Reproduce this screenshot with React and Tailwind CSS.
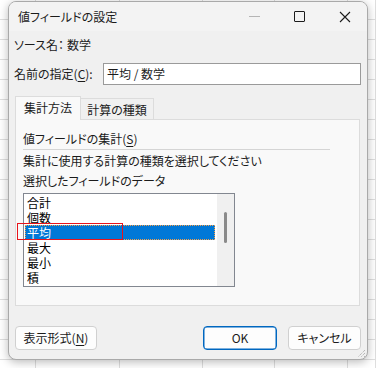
import React from "react";

const F = "font-['Noto_Sans_CJK_JP','Noto_Sans',sans-serif] [font-feature-settings:'palt']";

function Grid() {
  const cols = [36, 84, 83, 72, 73, 28];
  return (
    <div className="flex h-[368px] w-[376px] bg-white bg-[repeating-linear-gradient(to_bottom,transparent_0px,transparent_19px,#dedede_19px,#dedede_20px)]">
      {cols.map((w, i) => (
        <div key={i} style={{ width: w }} className="h-full shrink-0 border-r border-[#dedede]" />
      ))}
    </div>
  );
}

function U({ children }) {
  return <span className="underline underline-offset-[2px]">{children}</span>;
}

export default function App() {
  const items = ["合計", "個数", "平均", "最大", "最小", "積"];
  return (
    <div className={`relative h-[368px] w-[376px] overflow-hidden text-[12px] leading-[16px] text-[#1b1b1b] ${F}`}>
      <Grid />
      <div className="absolute left-[8px] top-[1px] flex h-[359px] w-[360px] flex-col overflow-hidden rounded-[8px] border border-[#a9a9a9] bg-[#f0f0f0] shadow-[0_2px_10px_rgba(0,0,0,0.28)]">
        {/* title bar */}
        <div className="flex h-[29px] shrink-0 items-center bg-[#f3f3f3]">
          <div className="pl-[9px]">値フィールドの設定</div>
          <div className="ml-auto flex h-full">
            <div className="flex h-full w-[45px] items-center justify-center">
              <div className="h-px w-[11px] bg-[#b5b5b5]" />
            </div>
            <div className="flex h-full w-[45px] items-center justify-center">
              <div className="h-[11px] w-[11px] rounded-[1px] border border-[#1b1b1b]" />
            </div>
            <div className="flex h-full w-[45px] items-center justify-center">
              <svg width="12" height="12" viewBox="0 0 12 12">
                <path d="M1 1 L11 11 M11 1 L1 11" stroke="#1b1b1b" strokeWidth="1.1" fill="none" />
              </svg>
            </div>
          </div>
        </div>

        {/* body */}
        <div className="flex flex-1 flex-col px-[6px] pt-[4px]">
          <div className="flex h-[20px] items-center">
            <div className="w-[53px] -ml-px">ソース名：</div>
            <div>数学</div>
          </div>
          <div className="mt-[8px] flex h-[22px] items-center">
            <div className="w-[89px] -ml-px">名前の指定(<U>C</U>):</div>
            <div className="flex h-[22px] flex-1 items-center border border-[#9a9a9a] bg-white pl-[3px]">
              平均 / 数学
            </div>
          </div>

          {/* tabs */}
          <div className="mt-[11px] flex h-[23px] items-end">
            <div className="relative z-10 -mb-px flex h-[24px] w-[66px] items-center justify-center border border-b-0 border-[#dcdcdc] bg-[#f9f9f9] pb-[1px]">
              集計方法
            </div>
            <div className="flex h-[21px] w-[73px] items-center justify-center border border-b-0 border-l-0 border-[#dcdcdc] bg-[#f0f0f0] pt-[1px]">
              計算の種類
            </div>
          </div>
          <div className="flex h-[187px] w-[345px] flex-col border border-[#dcdcdc] bg-[#f9f9f9] pl-[7px] pt-[11px]">
            <div className="flex h-[16px] items-center">値フィールドの集計(<U>S</U>)</div>
            <div className="mt-[2px] h-px w-[307px] bg-[#d5d5d5]" />
            <div className="mt-px flex h-[20px] items-center">集計に使用する計算の種類を選択してください</div>
            <div className="flex h-[20px] items-center">選択したフィールドのデータ</div>
            <div className="relative mt-[2px] flex h-[94px] w-[212px] border border-[#828790] bg-white">
              <div className="flex w-[193px] flex-col pt-px">
                {items.map((t, i) =>
                  i === 2 ? (
                    <div
                      key={t}
                      className="ml-px flex h-[15px] w-[190px] items-center border border-dotted border-[#f5a04a] bg-[#0078d7] pl-[1px] leading-[13px] text-white"
                    >
                      {t}
                    </div>
                  ) : (
                    <div key={t} className="flex h-[15px] items-center pl-[3px] leading-[14px] text-black">
                      {t}
                    </div>
                  )
                )}
              </div>
              <div className="flex flex-1 bg-[#f0f0f0] pl-[7px] pt-[18px]">
                <div className="h-[31px] w-[3px] rounded-full bg-[#8a8a8a]" />
              </div>
              <div className="absolute left-[-7px] top-[29px] h-[17px] w-[106px] border-[1.5px] border-[#e8141b]" />
            </div>
          </div>

          {/* buttons */}
          <div className="mt-[20px] flex h-[24px]">
            <div className="flex h-[24px] w-[82px] items-center justify-center rounded-[4px] border border-[#d0d0d0] bg-[#fdfdfd]">
              表示形式(<U>N</U>)
            </div>
            <div className="ml-auto flex h-[24px] w-[74px] items-center justify-center rounded-[4px] border border-[#0067c0] bg-[#fdfdfd] shadow-[inset_0_0_0_0.5px_#0067c0]">
              OK
            </div>
            <div className="ml-[11px] flex h-[24px] w-[73px] items-center justify-center rounded-[4px] border border-[#d0d0d0] bg-[#fdfdfd]">
              キャンセル
            </div>
          </div>
        </div>

        <svg className="absolute bottom-[1px] right-[1px]" width="9" height="9" viewBox="0 0 9 9">
          <path d="M8 1 L1 8 M8 4 L4 8 M8 7 L7 8" stroke="#a0a0a0" strokeWidth="1" strokeDasharray="1 1" fill="none" />
        </svg>
      </div>
    </div>
  );
}
